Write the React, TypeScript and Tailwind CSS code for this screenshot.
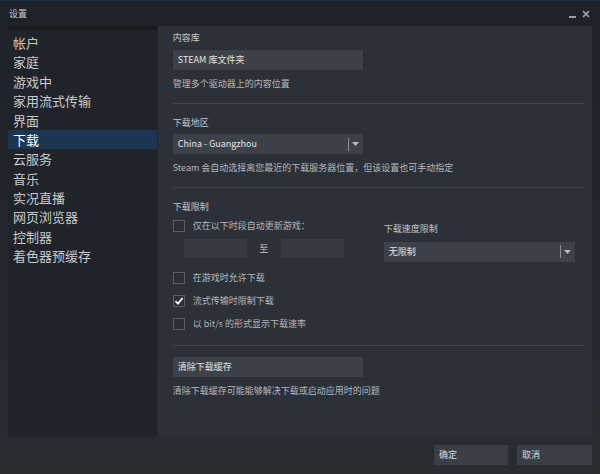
import React from "react";

const font = { fontFamily: '"Noto Sans CJK SC", "Noto Sans", sans-serif' };

function Check({ checked, label }: { checked?: boolean; label: string }) {
  return (
    <div className="flex items-center h-[14px] gap-[8px]">
      <div className="w-[12px] h-[12px] border border-[#5a5f66] flex items-center justify-center bg-[#2b2f36]">
        {checked && (
          <svg width="10" height="10" viewBox="0 0 10 10">
            <path d="M1.5 5.2 L4 7.6 L8.6 2" stroke="#ffffff" strokeWidth="1.8" fill="none" />
          </svg>
        )}
      </div>
      <span className="text-[9px] text-[#b5b8bc]">{label}</span>
    </div>
  );
}

function Select({ value, w }: { value: string; w: string }) {
  return (
    <div className={`${w} h-[20px] bg-[#3d424a] flex items-center`}>
      <span className="flex-1 pl-[5px] text-[9px] text-[#e2e4e6]">{value}</span>
      <div className="w-px h-[13px] bg-[#8a8e94]" />
      <div className="w-[14px] flex justify-center">
        <svg width="7" height="4" viewBox="0 0 7 4"><path d="M0 0 H7 L3.5 4Z" fill="#b8bbbf" /></svg>
      </div>
    </div>
  );
}

const menu = ["帐户", "家庭", "游戏中", "家用流式传输", "界面", "下载", "云服务", "音乐", "实况直播", "网页浏览器", "控制器", "着色器预缓存"];

export default function App() {
  return (
    <div style={font} className="w-[600px] h-[474px] flex flex-col bg-gradient-to-b from-[#1d2128] to-[#292c31] overflow-hidden border-t border-[#1c3150]">
      <div className="h-[25px] flex items-center pl-[9px] pr-[10px]">
        <span className="text-[9px] text-[#c9cbcd]">设置</span>
        <div className="flex-1" />
        <div className="w-[7px] h-[2px] bg-[#9a9da1] mt-[6px] mr-[6px]" />
        <svg width="8" height="8" viewBox="0 0 8 8"><path d="M1 1 L7 7 M7 1 L1 7" stroke="#a5a8ac" strokeWidth="1.6" /></svg>
      </div>
      <div className="flex h-[411px] pl-[8px] pr-[8px]">
        <div className="w-[149px] bg-[#20242a] border-t-[4px] border-[#17191d] pt-[3px]">
          {menu.map((m, i) => (
            <div key={m} className={`h-[19.4px] pl-[5px] flex items-center text-[13px] ${i === 5 ? "bg-[#1b3552] text-white" : i === 0 ? "text-[#c9c5b0]" : "text-[#c7cacd]"}`}>
              {m}
            </div>
          ))}
        </div>
        <div className="w-[435px] ml-[1px] bg-[#2c3038] pl-[15px] pr-[7px] pt-[3px] text-[#c3c6ca]">
          <div className="text-[9px] h-[14px] mt-[2px]">内容库</div>
          <div className="w-[190px] h-[20px] mt-[5px] bg-[#3d424a] flex items-center pl-[5px] text-[9px] text-[#e2e4e6]">STEAM 库文件夹</div>
          <div className="text-[9px] mt-[7px] text-[#b5b8bc]">管理多个驱动器上的内容位置</div>
          <div className="h-px bg-[#42464d] mt-[12px]" />
          <div className="text-[9px] mt-[12px]">下载地区</div>
          <div className="mt-[5px]"><Select value="China - Guangzhou" w="w-[190px]" /></div>
          <div className="text-[9px] mt-[7px] text-[#b5b8bc]">Steam 会自动选择离您最近的下载服务器位置，但该设置也可手动指定</div>
          <div className="h-px bg-[#42464d] mt-[12px]" />
          <div className="text-[9px] mt-[12px]">下载限制</div>
          <div className="flex mt-[6px]">
            <div className="w-[211px]">
              <Check label="仅在以下时段自动更新游戏：" />
              <div className="flex items-center mt-[6px] ml-[11px]">
                <div className="w-[63px] h-[19px] bg-[#353a42]" />
                <span className="w-[34px] text-center text-[9px]">至</span>
                <div className="w-[63px] h-[19px] bg-[#353a42]" />
              </div>
            </div>
            <div>
              <div className="text-[9px] mt-[3px]">下载速度限制</div>
              <div className="mt-[6px]"><Select value="无限制" w="w-[191px]" /></div>
            </div>
          </div>
          <div className="flex flex-col gap-[9px] mt-[9px]">
            <Check label="在游戏时允许下载" />
            <Check checked label="流式传输时限制下载" />
            <Check label="以 bit/s 的形式显示下载速率" />
          </div>
          <div className="h-px bg-[#42464d] mt-[14px]" />
          <div className="w-[190px] h-[20px] mt-[11px] bg-[#3d424a] flex items-center pl-[5px] text-[9px] text-[#e2e4e6]">清除下载缓存</div>
          <div className="text-[9px] mt-[7px] text-[#b5b8bc]">清除下载缓存可能能够解决下载或启动应用时的问题</div>
        </div>
      </div>
      <div className="flex justify-end gap-[9px] pr-[8px] pt-[8px]">
        <div className="w-[74px] h-[20px] bg-[#3a3f47] flex items-center pl-[5px] text-[9px] text-[#d8dadc]">确定</div>
        <div className="w-[75px] h-[20px] bg-[#3a3f47] flex items-center pl-[5px] text-[9px] text-[#d8dadc]">取消</div>
      </div>
    </div>
  );
}
